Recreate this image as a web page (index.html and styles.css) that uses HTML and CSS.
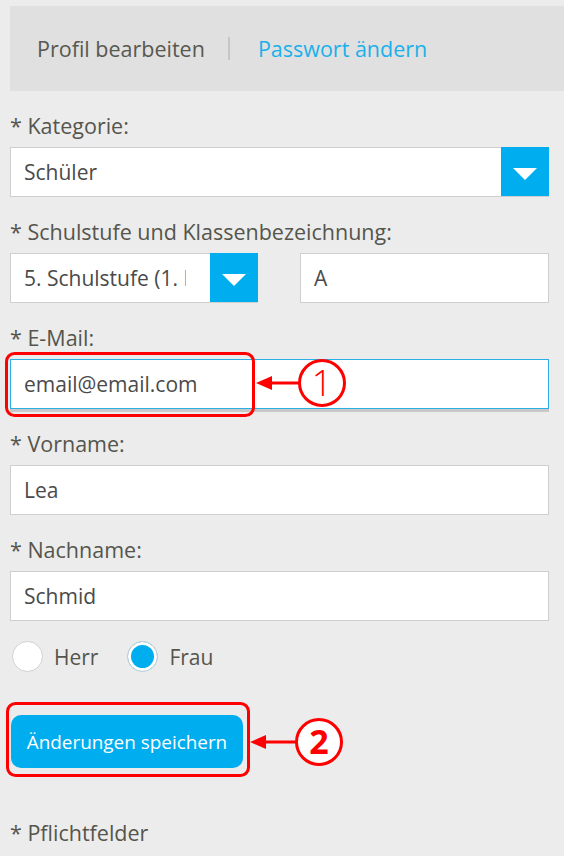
FILE: index.html
```html
<!DOCTYPE html>
<html lang="de">
<head>
<meta charset="utf-8">
<title>Profil bearbeiten</title>
<link rel="stylesheet" href="styles.css">
</head>
<body>
<div class="page">
  <nav class="tabs">
    <span class="tab">Profil bearbeiten</span>
    <span class="sep"></span>
    <span class="tab active">Passwort ändern</span>
  </nav>

  <form class="form">
    <div class="field">
      <label class="label">* Kategorie:</label>
      <div class="select">
        <span class="value">Schüler</span>
        <span class="drop"><span class="tri"></span></span>
      </div>
    </div>

    <div class="field">
      <label class="label">* Schulstufe und Klassenbezeichnung:</label>
      <div class="pair">
        <div class="select">
          <span class="value clip">5. Schulstufe (1. Klasse)</span>
          <span class="drop"><span class="tri"></span></span>
        </div>
        <div class="input"><span class="value">A</span></div>
      </div>
    </div>

    <div class="field">
      <label class="label">* E-Mail:</label>
      <div class="input focus"><span class="value">email@email.com</span></div>
    </div>

    <div class="field">
      <label class="label">* Vorname:</label>
      <div class="input"><span class="value">Lea</span></div>
    </div>

    <div class="field">
      <label class="label">* Nachname:</label>
      <div class="input"><span class="value">Schmid</span></div>
    </div>

    <div class="radios">
      <span class="radio"><span class="circle"></span>Herr</span>
      <span class="radio"><span class="circle checked"></span>Frau</span>
    </div>

    <div class="actions">
      <button type="button" class="save">Änderungen speichern</button>
    </div>

    <p class="note">* Pflichtfelder</p>
  </form>

  <svg class="annot" width="564" height="856" viewBox="0 0 564 856">
    <rect x="6.5" y="353.5" width="247" height="62" rx="8" fill="none" stroke="#ff0000" stroke-width="3"/>
    <line x1="268" y1="383" x2="299" y2="383" stroke="#ff0000" stroke-width="3"/>
    <polygon points="256,383 272,376 272,390" fill="#ff0000"/>
    <circle cx="322" cy="383" r="22.5" fill="#fff" stroke="#ff0000" stroke-width="3"/>
    <text x="322" y="396" text-anchor="middle" class="num1">1</text>

    <rect x="7.5" y="703.5" width="241" height="72" rx="8" fill="none" stroke="#ff0000" stroke-width="3"/>
    <line x1="263" y1="742" x2="296" y2="742" stroke="#ff0000" stroke-width="3"/>
    <polygon points="250,742 266,735 266,749" fill="#ff0000"/>
    <circle cx="319" cy="742" r="22.5" fill="#fff" stroke="#ff0000" stroke-width="3"/>
    <text x="319" y="754" text-anchor="middle" class="num2">2</text>
  </svg>
</div>
</body>
</html>
```

FILE: styles.css
```css
html, body {
  margin: 0;
  padding: 0;
  background: #ececec;
}

body {
  font-family: "Open Sans", "Noto Sans", sans-serif;
  color: #55554d;
}

.page {
  position: relative;
  width: 564px;
  height: 856px;
  padding: 6px 15px 0 10px;
  box-sizing: border-box;
  overflow: hidden;
}

.tabs {
  display: flex;
  align-items: center;
  height: 85px;
  margin-right: -15px;
  padding-left: 27px;
  background: #e0e0e0;
  font-size: 21.5px;
}

.tab {
  color: #58584f;
}

.tab.active {
  color: #1ab0ea;
}

.sep {
  width: 2px;
  height: 23px;
  margin: 0 28px 0 23px;
  background: #c6c6c6;
}

.form {
  margin: 22px 0 0;
}

.field {
  margin-bottom: 22px;
}

.label {
  display: block;
  font-size: 21.5px;
  line-height: 26px;
  margin-bottom: 8px;
  color: #55554d;
}

.select,
.input {
  display: flex;
  align-items: center;
  height: 50px;
  box-sizing: border-box;
  background: #fff;
  border: 1px solid #cfcfcf;
  font-size: 21px;
  color: #4a4a4a;
}

.value {
  flex: 1;
  padding-left: 13px;
  white-space: nowrap;
}

.value.clip {
  overflow: hidden;
  margin-right: 24px;
}

.drop {
  display: flex;
  align-items: center;
  justify-content: center;
  align-self: stretch;
  width: 48px;
  margin: -1px -1px 0 0;
  background: #00aeef;
}

.tri {
  width: 0;
  height: 0;
  margin-top: 4px;
  border-left: 12px solid transparent;
  border-right: 12px solid transparent;
  border-top: 12px solid #fff;
}

.pair {
  display: grid;
  grid-template-columns: 248px 249px;
  column-gap: 42px;
}

.input.focus {
  border-color: #2aaee6;
  box-shadow: 0 3px 0 #c8c8c8;
}

.radios {
  display: flex;
  align-items: center;
  gap: 29px;
  margin-top: -2px;
  padding-left: 2px;
  height: 31px;
  font-size: 21px;
  color: #55554d;
}

.radio {
  display: flex;
  align-items: center;
  gap: 11px;
}

.circle {
  width: 31px;
  height: 31px;
  box-sizing: border-box;
  border-radius: 50%;
  background: #fff;
  border: 1px solid #d2d2d2;
}

.circle.checked {
  background: #00aeef;
  box-shadow: inset 0 0 0 3px #fff;
}

.actions {
  margin-top: 43px;
  padding-left: 1px;
}

.save {
  width: 232px;
  height: 53px;
  border: none;
  border-radius: 10px;
  background: #00aeef;
  color: #fff;
  font-family: "Open Sans", "Noto Sans", sans-serif;
  font-size: 18.9px;
  padding: 0;
}

.note {
  margin: 52px 0 0;
  font-size: 21.5px;
  line-height: 26px;
  color: #55554d;
}

.annot {
  position: absolute;
  left: 0;
  top: 0;
  pointer-events: none;
}

.num1 {
  font-family: "Open Sans", sans-serif;
  font-size: 36px;
  font-weight: 300;
  fill: #ff0000;
}

.num2 {
  font-family: "Open Sans", sans-serif;
  font-size: 34px;
  font-weight: 700;
  fill: #ff0000;
}
```
